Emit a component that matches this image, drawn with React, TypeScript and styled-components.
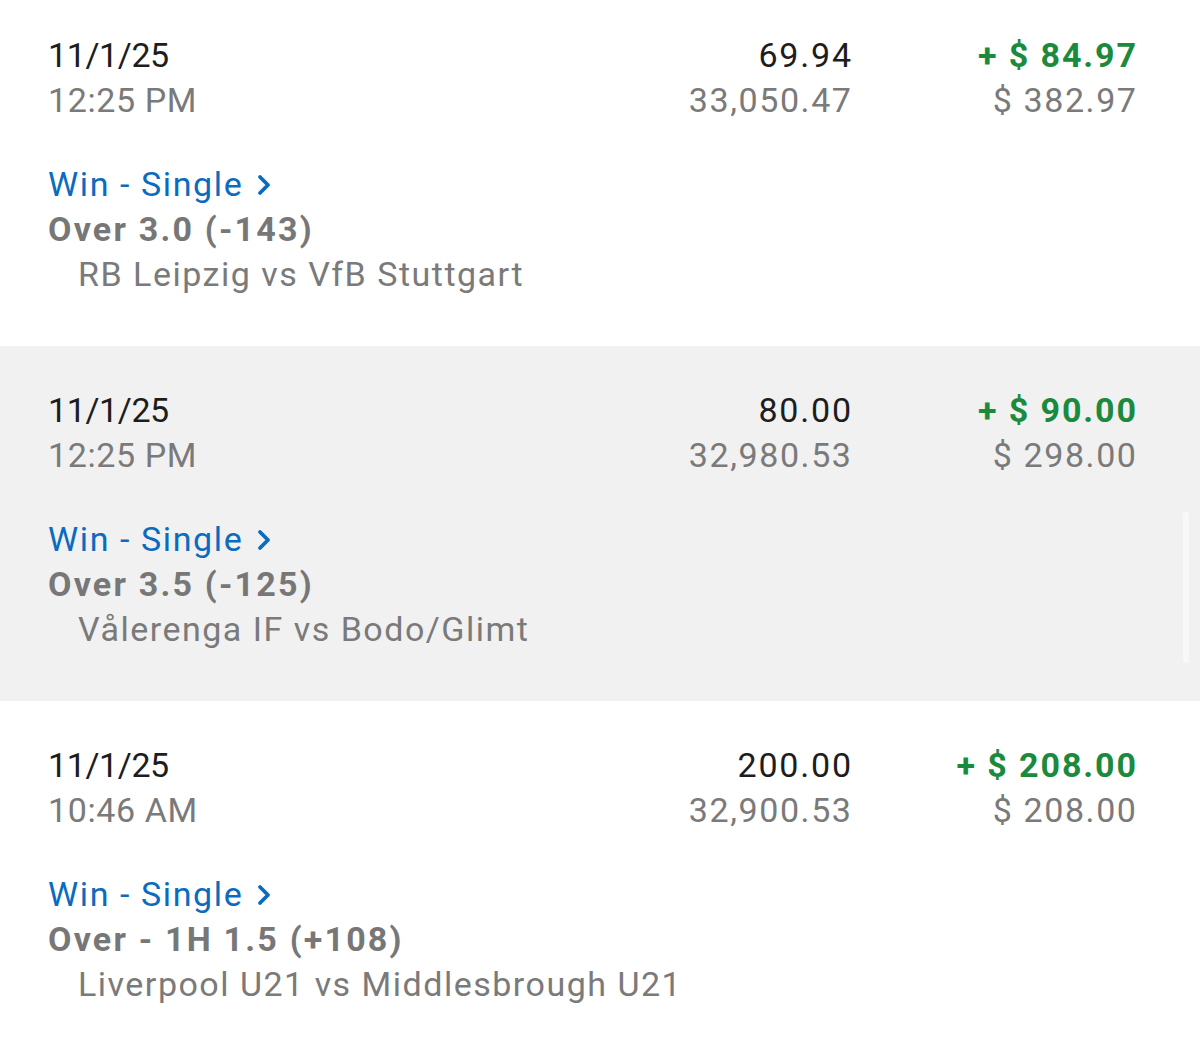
import React from "react";
import styled, { createGlobalStyle } from "styled-components";

const Global = createGlobalStyle`
  html, body { margin: 0; padding: 0; background: #ffffff; }
  body { font-family: Roboto, "Open Sans", "Liberation Sans", sans-serif; -webkit-font-smoothing: antialiased; }
`;

const Page = styled.div`
  position: relative;
  width: 1200px;
  height: 1040px;
  overflow: hidden;
  background: #ffffff;
`;

const List = styled.div`
  display: flex;
  flex-direction: column;
  margin-top: -9px;
`;

const Row = styled.div<{ $shaded?: boolean }>`
  box-sizing: border-box;
  height: 355px;
  padding: 42px 64px 49px 48px;
  background: ${(p) => (p.$shaded ? "#f1f1f1" : "#ffffff")};
  display: flex;
  flex-direction: column;
  gap: 39px;
`;

const Head = styled.div`
  display: grid;
  grid-template-columns: 1fr auto 285px;
  font-size: 34px;
  line-height: 45px;
`;

const Col = styled.div<{ $align?: "left" | "right" }>`
  display: flex;
  flex-direction: column;
  align-items: ${(p) => (p.$align === "right" ? "flex-end" : "flex-start")};
`;

/* trailing letter-spacing is pulled back by a negative right margin so that right edges line up */
const Primary = styled.span<{ $spacing?: number }>`
  color: #1d1d1d;
  white-space: nowrap;
  letter-spacing: ${(p) => p.$spacing ?? 0}px;
  margin-right: ${(p) => -(p.$spacing ?? 0)}px;
`;

const Secondary = styled.span<{ $spacing?: number }>`
  color: #7a7a7a;
  white-space: nowrap;
  letter-spacing: ${(p) => p.$spacing ?? 0}px;
  margin-right: ${(p) => -(p.$spacing ?? 0)}px;
`;

const Gain = styled.span`
  color: #1b8a3d;
  font-weight: 700;
  white-space: nowrap;
  letter-spacing: 1.9px;
  margin-right: -1.9px;
`;

const Details = styled.div`
  display: flex;
  flex-direction: column;
  align-items: flex-start;
  font-size: 34px;
  line-height: 45px;
`;

const BetType = styled.span`
  display: inline-flex;
  align-items: center;
  gap: 14px;
  color: #0b6bbf;
  white-space: nowrap;
  letter-spacing: 1.6px;
`;

const Selection = styled.span`
  color: #777777;
  font-weight: 700;
  white-space: nowrap;
  letter-spacing: 2.2px;
`;

const Match = styled.span`
  color: #7a7a7a;
  padding-left: 30px;
  white-space: nowrap;
  letter-spacing: 1.5px;
`;

const Scrollbar = styled.div`
  position: absolute;
  left: 1183px;
  top: 512px;
  width: 6px;
  height: 151px;
  border-radius: 3px;
  background: #f8f8f8;
`;

const Chevron = () => (
  <svg width="14" height="22" viewBox="0 0 14 22" aria-hidden="true">
    <path d="M3 3 L11 11 L3 19" fill="none" stroke="#0b6bbf" strokeWidth="3.8" strokeLinecap="round" strokeLinejoin="round" />
  </svg>
);

type Bet = {
  date: string;
  time: string;
  stake: string;
  balance: string;
  profit: string;
  payout: string;
  selection: string;
  match: string;
};

const bets: Bet[] = [
  {
    date: "11/1/25",
    time: "12:25 PM",
    stake: "69.94",
    balance: "33,050.47",
    profit: "+ $ 84.97",
    payout: "$ 382.97",
    selection: "Over 3.0 (-143)",
    match: "RB Leipzig vs VfB Stuttgart",
  },
  {
    date: "11/1/25",
    time: "12:25 PM",
    stake: "80.00",
    balance: "32,980.53",
    profit: "+ $ 90.00",
    payout: "$ 298.00",
    selection: "Over 3.5 (-125)",
    match: "Vålerenga IF vs Bodo/Glimt",
  },
  {
    date: "11/1/25",
    time: "10:46 AM",
    stake: "200.00",
    balance: "32,900.53",
    profit: "+ $ 208.00",
    payout: "$ 208.00",
    selection: "Over - 1H 1.5 (+108)",
    match: "Liverpool U21 vs Middlesbrough U21",
  },
];

export default function App() {
  return (
    <Page>
      <Global />
      <List>
        {bets.map((b, i) => (
          <Row key={i} $shaded={i === 1}>
            <Head>
              <Col>
                <Primary $spacing={-0.4}>{b.date}</Primary>
                <Secondary $spacing={0.6}>{b.time}</Secondary>
              </Col>
              <Col $align="right">
                <Primary $spacing={1.8}>{b.stake}</Primary>
                <Secondary $spacing={1.6}>{b.balance}</Secondary>
              </Col>
              <Col $align="right">
                <Gain>{b.profit}</Gain>
                <Secondary $spacing={1.6}>{b.payout}</Secondary>
              </Col>
            </Head>
            <Details>
              <BetType>
                Win - Single <Chevron />
              </BetType>
              <Selection>{b.selection}</Selection>
              <Match>{b.match}</Match>
            </Details>
          </Row>
        ))}
      </List>
      <Scrollbar />
    </Page>
  );
}
